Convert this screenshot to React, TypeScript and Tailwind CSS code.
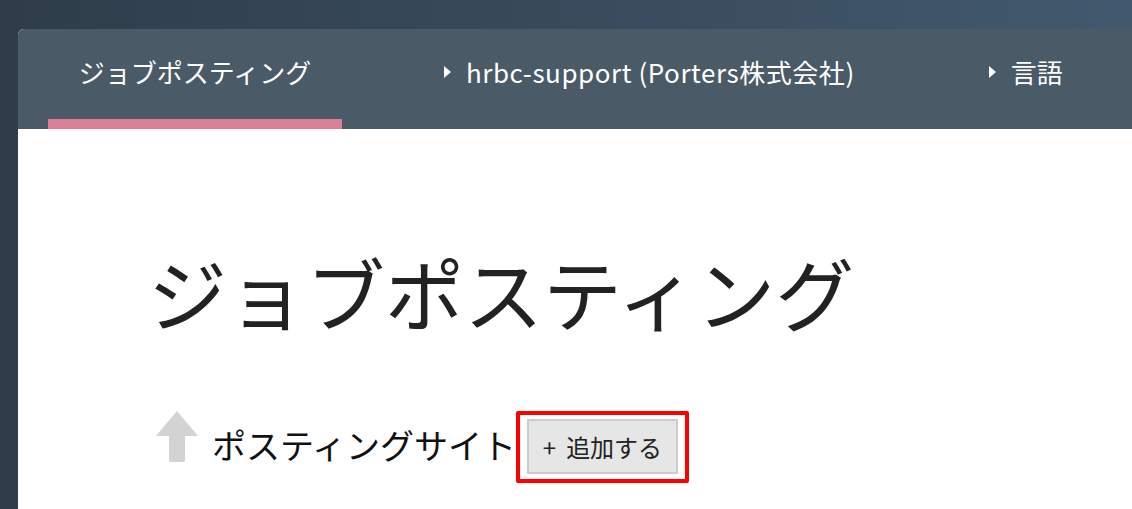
import React from "react";

const jp = { fontFamily: '"Noto Sans CJK JP", "Noto Sans", sans-serif' };

function Caret() {
    return (
        <svg width="7" height="12" viewBox="0 0 7 12" className="mr-[15px]">
            <path d="M0 0 L7 6 L0 12 Z" fill="#ffffff" />
        </svg>
    );
}

function UpArrow() {
    return (
        <svg width="42" height="52" viewBox="0 0 42 52">
            <path d="M21 0 L42 25 L29 25 L29 49 Q29 51 27 51 L15 51 Q13 51 13 49 L13 25 L0 25 Z" fill="#d3d3d3" />
        </svg>
    );
}

export default function App() {
    return (
        <div
            className="w-[1132px] h-[509px] overflow-hidden bg-gradient-to-r from-[#2f3d4a] to-[#42596d] pt-[29px] pl-[18px]"
            style={jp}
        >
            <div className="h-full bg-white rounded-tl-[6px] overflow-hidden">
                {/* Top navigation */}
                <nav className="h-[100px] bg-[#4a5a66] flex items-stretch text-white">
                    <div className="relative ml-[30px] w-[294px] flex items-center justify-center pb-[14px]">
                        <span className="text-[26px] leading-none">ジョブポスティング</span>
                        <div className="absolute left-0 right-0 bottom-0 h-[10px] bg-[#db8095]" />
                    </div>
                    <div className="ml-[102px] flex items-center pb-[14px]">
                        <Caret />
                        <span className="text-[26px] leading-none tracking-[0.55px]">hrbc-support (Porters株式会社)</span>
                    </div>
                    <div className="ml-[134px] flex items-center pb-[14px]">
                        <Caret />
                        <span className="text-[26px] leading-none">言語</span>
                    </div>
                </nav>

                {/* Content */}
                <div className="pl-[130px] pt-[123px]">
                    <h1 className="text-[79px] leading-none font-normal text-[#222222]">ジョブポスティング</h1>

                    <div className="mt-[80px] flex items-start">
                        <div className="ml-[8px]">
                            <UpArrow />
                        </div>
                        <span className="ml-[14px] mt-[17px] text-[34px] leading-none text-[#111111]">ポスティングサイト</span>
                        <div className="border-[4px] border-[#ff0000] rounded-[2px] px-[7px] pt-[4px] pb-[5px]">
                            <button className="h-[55px] w-[151px] flex items-center justify-center bg-[#e6e6e6] border-[2px] border-[#cccccc] text-[24px] leading-none text-[#222222]">
                                <span className="mr-[10px]">+</span>
                                <span>追加する</span>
                            </button>
                        </div>
                    </div>
                </div>
            </div>
        </div>
    );
}
